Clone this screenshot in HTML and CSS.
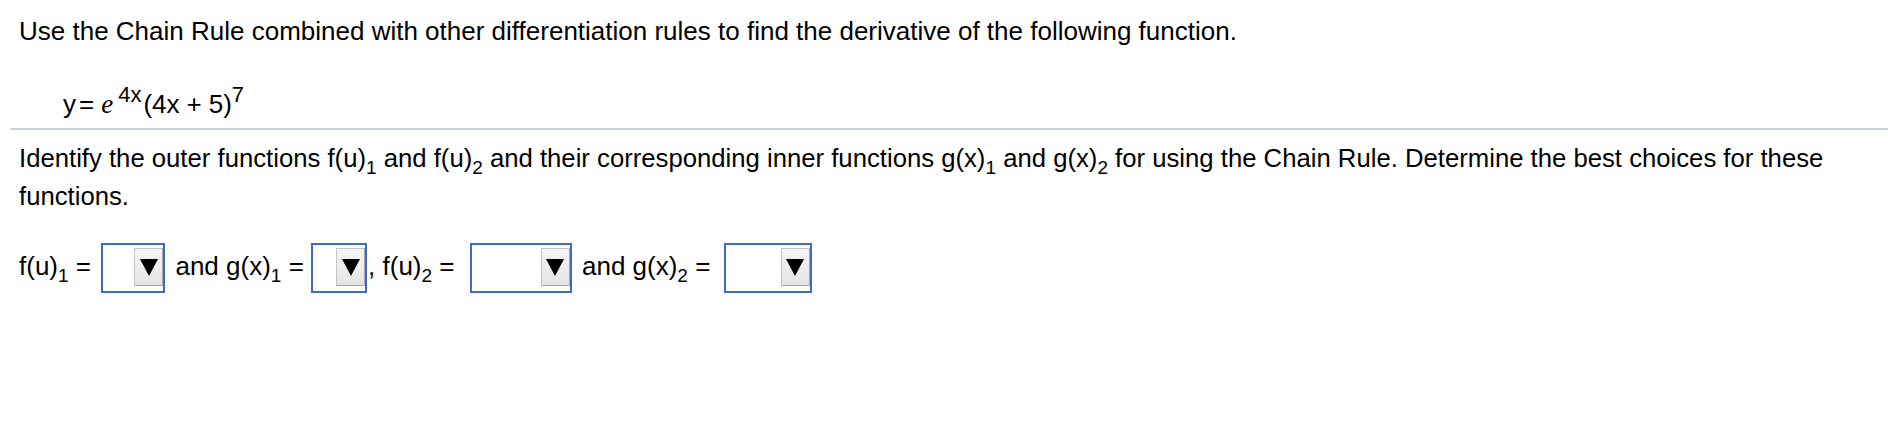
FILE: index.html
```html
<!DOCTYPE html>
<html lang="en">
<head>
<meta charset="utf-8">
<title>Chain Rule</title>
<link rel="stylesheet" href="styles.css">
</head>
<body>
<div class="page">
  <p class="intro">Use the Chain Rule combined with other differentiation rules to find the derivative of the following function.</p>
  <p class="eq">y<span class="op">=</span><i class="e">e</i><sup class="sup4x">4x</sup>(4x<span class="op plus">+</span>5)<sup class="sup7">7</sup></p>
</div>
<div class="divider"></div>
<div class="page">
  <p class="prompt">Identify the outer functions f(u)<sub>1</sub> and f(u)<sub>2</sub> and their corresponding inner functions g(x)<sub>1</sub> and g(x)<sub>2</sub> for using the Chain Rule. Determine the best choices for these functions.</p>
  <p class="answers">f(u)<sub>1</sub> = <span class="sel w1"><span class="btn"><svg width="18" height="18" viewBox="0 0 18 18"><polygon points="0,1 18,1 9,18" fill="#000"/></svg></span></span> and g(x)<sub>1</sub> = <span class="sel w2"><span class="btn"><svg width="18" height="18" viewBox="0 0 18 18"><polygon points="0,1 18,1 9,18" fill="#000"/></svg></span></span><span class="comma">,</span> f(u)<sub>2</sub> = <span class="sel w3"><span class="btn"><svg width="18" height="18" viewBox="0 0 18 18"><polygon points="0,1 18,1 9,18" fill="#000"/></svg></span></span> and g(x)<sub>2</sub> = <span class="sel w4"><span class="btn"><svg width="18" height="18" viewBox="0 0 18 18"><polygon points="0,1 18,1 9,18" fill="#000"/></svg></span></span></p>
</div>
</body>
</html>
```
FILE: styles.css
```css
html, body {
  margin: 0;
  padding: 0;
  background: #ffffff;
}

body {
  font-family: "Liberation Sans", Arial, Helvetica, sans-serif;
  color: #000000;
  font-size: 26px;
}

.page {
  padding-left: 19px;
}

p {
  margin: 0;
}

.intro {
  padding-top: 16px;
  line-height: 30px;
}

.eq {
  margin-top: 38px;
  padding-left: 44px;
  line-height: 30px;
  height: 30px;
}

.eq .op {
  margin: 0 3px;
}

.eq .plus {
  margin: 0 7px;
}

.eq .e {
  font-family: "Liberation Serif", "Times New Roman", serif;
  font-style: italic;
  font-size: 27px;
  margin-left: 4px;
  margin-right: 5px;
}

.eq sup {
  font-size: 22px;
  line-height: 1;
  vertical-align: 11px;
}

.eq .sup4x {
  margin-right: 2px;
}

.divider {
  margin-top: 14px;
  margin-left: 10px;
  height: 2px;
  background: #cbd0dd;
}

.prompt {
  margin-top: 9px;
  font-size: 25.7px;
  line-height: 38px;
  padding-right: 30px;
}

sub {
  font-size: 19px;
  line-height: 1;
  vertical-align: -7px;
}

.answers {
  margin-top: 26px;
  line-height: 50px;
}

.sel {
  display: inline-flex;
  justify-content: flex-end;
  align-items: flex-start;
  box-sizing: border-box;
  height: 50px;
  padding-top: 3px;
  border: 2px solid #3b6cc8;
  background: #ffffff;
  vertical-align: middle;
  margin: 0 3px;
}

.w1 { width: 64px; }
.w2 { width: 56px; margin-left: 0; }
.w3 { width: 102px; margin-left: 8px; }
.w4 { width: 88px; margin-left: 6px; }

.comma {
  margin-left: -2px;
}

.btn {
  display: flex;
  align-items: center;
  justify-content: center;
  box-sizing: border-box;
  width: 29px;
  height: 38px;
  border: 1px solid #c4c4c4;
  border-right-color: #a8a8a8;
  border-bottom-color: #a8a8a8;
  background: linear-gradient(#f6f6f6, #e4e4e4);
}

.btn svg {
  display: block;
}
```
